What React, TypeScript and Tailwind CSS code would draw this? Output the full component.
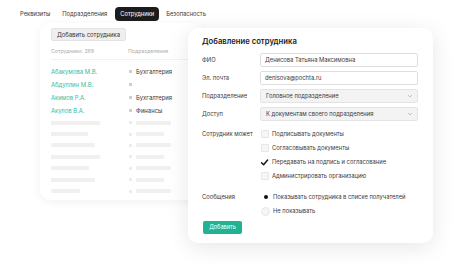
import React from "react";

const names = ["Абакумова М.В.", "Абдуллин М.В.", "Акимов Р.А.", "Акулов В.А."];
const deps = ["Бухгалтерия", "", "Бухгалтерия", "Финансы"];
const skel = [
  [49, 35],
  [37, 28],
  [44, 35],
  [49, 28],
  [38, 35],
  [44, 28],
  [29, 35],
];

function Check({ checked }: { checked?: boolean }) {
  if (checked) {
    return (
      <svg width="9" height="9" viewBox="0 0 9 9" className="shrink-0">
        <path d="M1.5 4.8 L3.6 6.8 L7.6 2" fill="none" stroke="#111" strokeWidth="1.4" strokeLinecap="round" strokeLinejoin="round" />
      </svg>
    );
  }
  return <div className="w-[8px] h-[8px] shrink-0 rounded-[1px] border border-[#e6e6e6] bg-[#f6f6f6] mx-[0.5px]" />;
}

function Radio({ on }: { on?: boolean }) {
  if (on) {
    return (
      <div className="w-[9px] h-[9px] flex items-center justify-center shrink-0">
        <div className="w-[4px] h-[4px] rounded-full bg-[#111]" />
      </div>
    );
  }
  return <div className="w-[9px] h-[9px] rounded-full border border-[#e6e6e6] bg-[#f6f6f6] shrink-0" />;
}

function Chevron() {
  return (
    <svg width="6" height="4" viewBox="0 0 6 4" className="shrink-0">
      <path d="M1 1 L3 3 L5 1" fill="none" stroke="#b5b5b5" strokeWidth="0.8" />
    </svg>
  );
}

export default function App() {
  return (
    <div
      className="relative w-[474px] h-[266px] bg-white overflow-hidden text-[#3a3a3a]"
      style={{ fontFamily: "Inter, 'Noto Sans', sans-serif" }}
    >
      {/* Tabs */}
      <div className="flex items-center h-[14px] mt-[7px] pl-[20px] text-[5.8px] leading-none">
        <div className="mr-[12px]">Реквизиты</div>
        <div className="mr-[8px]">Подразделения</div>
        <div className="h-[14px] px-[5px] flex items-center rounded-[4px] bg-[#1c1c1c] text-white mr-[7px]">Сотрудники</div>
        <div>Безопасность</div>
      </div>

      {/* Left card */}
      <div className="ml-[40px] mt-[2px] w-[165px] h-[177px] rounded-[10px] bg-white shadow-[0_2px_10px_rgba(0,0,0,0.06)] pl-[11px] pt-[5px]">
        <div className="w-[75px] h-[13px] flex items-center justify-center rounded-[2px] bg-[#efefef] border border-[#e2e2e2] text-[5.9px] leading-none text-[#333]">
          Добавить сотрудника
        </div>
        <div className="flex items-center mt-[8px] h-[6px] text-[5.2px] leading-none text-[#ababab]">
          <div className="w-[77px]">Сотрудники: 269</div>
          <div>Подразделение</div>
        </div>
        <div className="mt-[4px] mr-0 border-t border-[#f2f2f2]" />
        <div className="flex flex-col mt-[5px]">
          {names.map((n, i) => (
            <div key={n} className="flex items-center h-[13px] text-[5.9px] leading-none">
              <div className="w-[78px] text-[#35bba2]">{n}</div>
              <div className="w-[3px] h-[3px] bg-[#cfcfcf] mr-[4px]" />
              <div className="text-[#3a3a3a]">{deps[i]}</div>
            </div>
          ))}
        </div>
        <div className="flex flex-col">
          {skel.map(([a, b], i) => (
            <div key={i} className="flex items-center h-[11.4px]">
              <div className="w-[78px]">
                <div className="h-[4px] rounded-[1px] bg-[#f0f0f0]" style={{ width: a }} />
              </div>
              <div className="w-[3px] h-[3px] bg-[#ececec] mr-[4px]" />
              <div className="h-[4px] rounded-[1px] bg-[#f0f0f0]" style={{ width: b }} />
            </div>
          ))}
        </div>
      </div>

      {/* Modal */}
      <div className="absolute left-[188px] top-[28px] w-[245px] h-[215px] rounded-[10px] bg-white shadow-[0_4px_22px_rgba(0,0,0,0.10)] pl-[14px] pr-[15px] pt-[8px] text-[5.8px] leading-none">
        <div className="h-[12px] flex items-center text-[7.7px] font-semibold text-[#1a1a1a]">Добавление сотрудника</div>
        <div className="flex flex-col gap-[4px] mt-[5px]">
          <div className="flex items-center">
            <div className="w-[58px]">ФИО</div>
            <div className="flex-1 h-[14px] border border-[#dedede] rounded-[2px] flex items-center px-[4px]">Денисова Татьяна Максимовна</div>
          </div>
          <div className="flex items-center">
            <div className="w-[58px]">Эл. почта</div>
            <div className="flex-1 h-[14px] border border-[#dedede] rounded-[2px] flex items-center px-[4px]">denisova@pochta.ru</div>
          </div>
          <div className="flex items-center">
            <div className="w-[58px]">Подразделение</div>
            <div className="flex-1 h-[14px] border border-[#e4e4e4] bg-[#f3f3f3] rounded-[2px] flex items-center justify-between pl-[5px] pr-[4px]">
              <span>Головное подразделение</span>
              <Chevron />
            </div>
          </div>
          <div className="flex items-center">
            <div className="w-[58px]">Доступ</div>
            <div className="flex-1 h-[14px] border border-[#e4e4e4] bg-[#f3f3f3] rounded-[2px] flex items-center justify-between pl-[5px] pr-[4px]">
              <span>К документам своего подразделения</span>
              <Chevron />
            </div>
          </div>
        </div>

        <div className="flex mt-[6px]">
          <div className="w-[58px] h-[14px] flex items-center">Сотрудник может</div>
          <div className="flex flex-col">
            {[
              ["Подписывать документы", false],
              ["Согласовывать документы", false],
              ["Передавать на подпись и согласование", true],
              ["Администрировать организацию", false],
            ].map(([t, c]) => (
              <div key={t as string} className="flex items-center h-[14px] gap-[3px]">
                <Check checked={c as boolean} />
                <span>{t as string}</span>
              </div>
            ))}
          </div>
        </div>

        <div className="flex mt-[7px]">
          <div className="w-[58px] h-[14px] flex items-center">Сообщения</div>
          <div className="flex flex-col">
            <div className="flex items-center h-[14px] gap-[3px] ml-[1px]">
              <Radio on />
              <span>Показывать сотрудника в списке получателей</span>
            </div>
            <div className="flex items-center h-[14px] gap-[3px] ml-[1px]">
              <Radio />
              <span>Не показывать</span>
            </div>
          </div>
        </div>

        <div className="mt-[3px] ml-[1px] w-[39px] h-[13px] rounded-[2px] bg-[#1fb394] text-white flex items-center justify-center text-[5.6px]">
          Добавить
        </div>
      </div>
    </div>
  );
}
